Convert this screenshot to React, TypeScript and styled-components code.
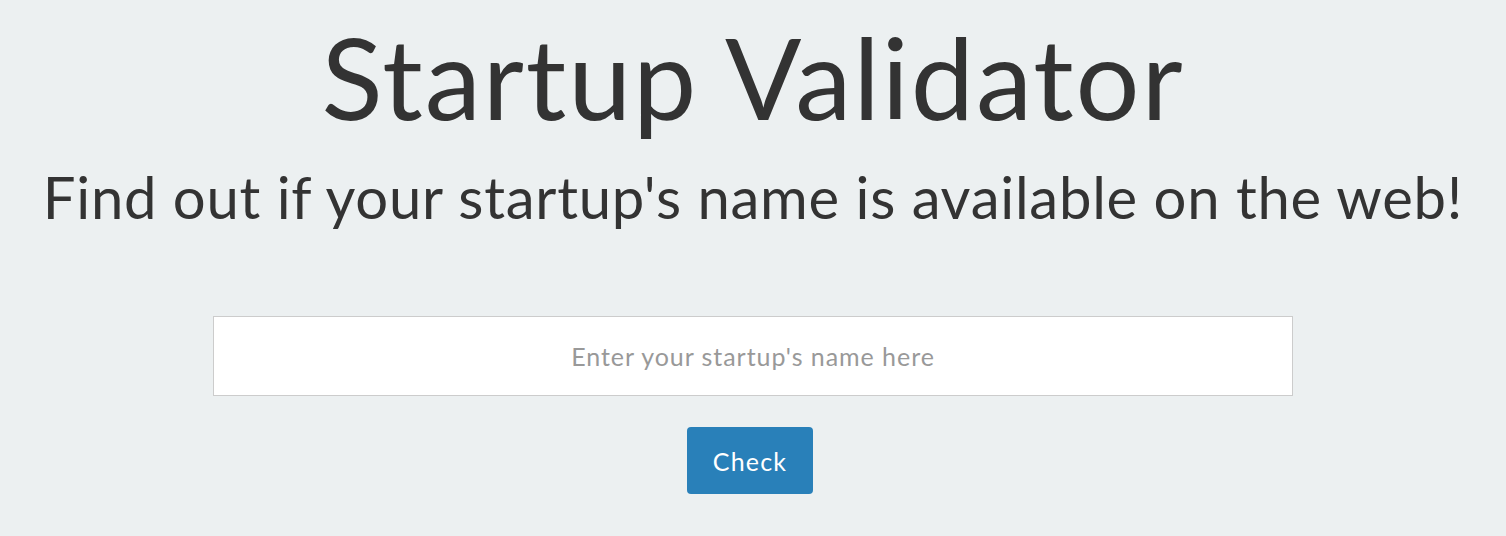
import React from "react";
import styled, { createGlobalStyle } from "styled-components";

const GlobalStyle = createGlobalStyle`
  html, body {
    margin: 0;
    padding: 0;
    background: #ecf0f1;
  }
  body {
    font-family: Lato, "Liberation Sans", sans-serif;
    color: #333333;
  }
`;

const Page = styled.div`
  display: flex;
  flex-direction: column;
  align-items: center;
  min-height: 536px;
  text-align: center;
`;

const Title = styled.h1`
  margin: 0;
  padding-top: 14px;
  font-size: 113px;
  font-weight: 400;
  line-height: 124px;
  letter-spacing: 1.9px;
`;

const Subtitle = styled.h2`
  margin: 24px 0 0;
  font-size: 58px;
  font-weight: 400;
  line-height: 70px;
  letter-spacing: 0.75px;
`;

const Form = styled.form`
  display: flex;
  flex-direction: column;
  align-items: center;
  margin-top: 84px;
  gap: 31px;
`;

const NameInput = styled.input`
  box-sizing: border-box;
  width: 1080px;
  height: 80px;
  border: 1px solid #cccccc;
  background: #ffffff;
  font-family: Lato, "Liberation Sans", sans-serif;
  font-size: 25px;
  letter-spacing: 0.95px;
  color: #333333;
  text-align: center;
  outline: none;
  &::placeholder {
    color: #999999;
  }
`;

const CheckButton = styled.button`
  box-sizing: border-box;
  width: 126px;
  height: 67px;
  margin-right: 6px;
  border: none;
  border-radius: 4px;
  background: #2980b9;
  color: #ffffff;
  font-family: Lato, "Liberation Sans", sans-serif;
  font-size: 25px;
  letter-spacing: 1.2px;
  cursor: pointer;
`;

const App = () => {
  return (
    <>
      <GlobalStyle />
      <Page>
        <Title>Startup Validator</Title>
        <Subtitle>Find out if your startup's name is available on the web!</Subtitle>
        <Form onSubmit={(e) => e.preventDefault()}>
          <NameInput type="text" placeholder="Enter your startup's name here" />
          <CheckButton type="submit">Check</CheckButton>
        </Form>
      </Page>
    </>
  );
};

export default App;
